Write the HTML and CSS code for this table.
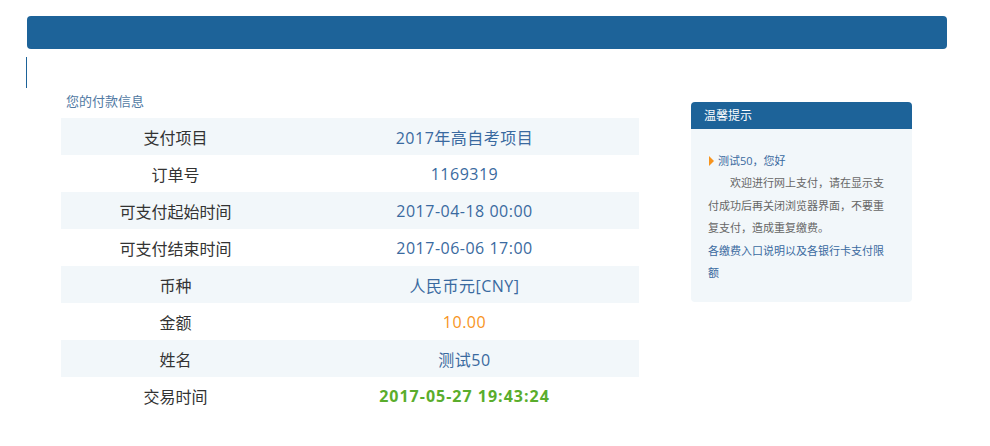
FILE: index.html
```html
<!DOCTYPE html>
<html lang="zh-CN">
<head>
<meta charset="utf-8">
<title>支付信息</title>
<link rel="stylesheet" href="styles.css">
</head>
<body>
<div class="page">
  <div class="topbar"></div>
  <div class="marker"></div>
  <div class="main">
    <div class="info">
      <div class="info-title">您的付款信息</div>
      <table class="pay-table">
        <tr class="alt"><td class="label">支付项目</td><td class="value">2017年高自考项目</td></tr>
        <tr><td class="label">订单号</td><td class="value">1169319</td></tr>
        <tr class="alt"><td class="label">可支付起始时间</td><td class="value">2017-04-18 00:00</td></tr>
        <tr><td class="label">可支付结束时间</td><td class="value">2017-06-06 17:00</td></tr>
        <tr class="alt"><td class="label">币种</td><td class="value">人民币元[CNY]</td></tr>
        <tr><td class="label">金额</td><td class="value amount">10.00</td></tr>
        <tr class="alt"><td class="label">姓名</td><td class="value">测试50</td></tr>
        <tr><td class="label">交易时间</td><td class="value trade-time">2017-05-27 19:43:24</td></tr>
      </table>
    </div>
    <div class="tips">
      <div class="tips-head">温馨提示</div>
      <div class="tips-body">
        <div class="greet"><span class="arrow"></span>测试50，您好</div>
        <p class="tips-text">欢迎进行网上支付，请在显示支付成功后再关闭浏览器界面，不要重复支付，造成重复缴费。</p>
        <a class="tips-link" href="#">各缴费入口说明以及各银行卡支付限额</a>
      </div>
    </div>
  </div>
</div>
</body>
</html>
```
FILE: styles.css
```css
html, body {
  margin: 0;
  padding: 0;
  background: #fff;
}
body {
  font-family: "Open Sans", "Noto Sans CJK SC", sans-serif;
  color: #333;
}
.page {
  padding: 16px 0 0 26px;
}
.topbar {
  margin-left: 1px;
  width: 920px;
  height: 33px;
  background: #1d6399;
  border-radius: 4px;
}
.marker {
  width: 1px;
  height: 31px;
  margin-top: 8px;
  background: #1d6399;
}
.main {
  display: flex;
  align-items: flex-start;
  margin-top: 5px;
  margin-left: 35px;
}
.info {
  width: 578px;
}
.info-title {
  font-size: 13px;
  line-height: 16px;
  height: 16px;
  padding-left: 5px;
  margin-bottom: 9px;
  color: #5179a3;
}
.pay-table {
  width: 578px;
  border-collapse: collapse;
  border-spacing: 0;
  font-size: 16px;
}
.pay-table td {
  height: 37px;
  padding: 0;
  text-align: center;
  vertical-align: middle;
}
.pay-table tr.alt td {
  background: #f2f7fa;
}
.pay-table .label {
  width: 229px;
  color: #333;
}
.pay-table .value {
  color: #3a6aa0;
  letter-spacing: 0.5px;
}
.pay-table .amount {
  color: #f7941d;
}
.pay-table .trade-time {
  color: #5aad2c;
  font-weight: bold;
  letter-spacing: 1px;
}
.tips {
  width: 221px;
  margin-left: 52px;
  margin-top: 9px;
}
.tips-head {
  height: 27px;
  line-height: 27px;
  background: #1d6399;
  color: #fff;
  font-size: 12px;
  padding-left: 13px;
  border-radius: 4px 4px 0 0;
}
.tips-body {
  height: 173px;
  box-sizing: border-box;
  background: #f2f7fa;
  border-radius: 0 0 4px 4px;
  padding: 21px 24px 0 17px;
  font-size: 11px;
  line-height: 22.4px;
}
.greet {
  color: #3a6aa0;
  display: flex;
  align-items: center;
}
.arrow {
  width: 0;
  height: 0;
  border-top: 5.5px solid transparent;
  border-bottom: 5.5px solid transparent;
  border-left: 5px solid #f7941d;
  margin: 0 4px 0 1px;
}
.tips-text {
  margin: 0;
  text-indent: 2em;
  color: #666;
}
.tips-link {
  display: block;
  color: #3a6aa0;
  text-decoration: none;
}
```
